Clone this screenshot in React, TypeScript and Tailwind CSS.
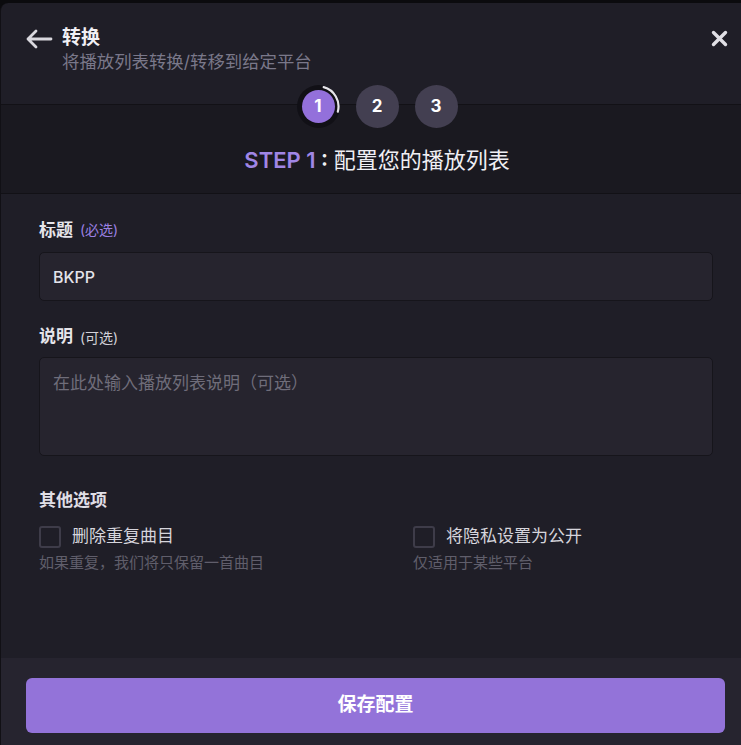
import React from "react";

const FONT = { fontFamily: "Inter, 'Noto Sans CJK SC', 'Noto Sans', sans-serif" };

function Checkbox() {
  return <div className="w-[22px] h-[22px] border-2 border-[#3e3c49] rounded-[3px] shrink-0" />;
}

export default function App() {
  return (
    <div className="w-[741px] h-[745px] bg-[#0b0b0e] pt-[3px] overflow-hidden" style={FONT}>
      <div className="h-[742px] bg-[#1f1e27] rounded-tl-[8px] border-l border-[#111015] flex flex-col">
        {/* Header */}
        <div className="h-[102px] shrink-0 relative border-b border-[#121116]">
          <div className="flex items-start pt-[23px] pl-[24px]">
            <svg width="28" height="22" viewBox="0 0 28 22" className="mt-[2px]" fill="none">
              <path d="M26 11 H3 M11 3 L3 11 L11 19" stroke="#d9d8de" strokeWidth="2.8" strokeLinecap="round" strokeLinejoin="round" />
            </svg>
            <div className="ml-[9px]">
              <div className="text-[19px] leading-[24px] font-bold text-[#f1f0f5]">转换</div>
              <div className="text-[17.4px] leading-[22px] text-[#7a788a] mt-[1px] whitespace-nowrap">将播放列表转换/转移到给定平台</div>
            </div>
          </div>
          <svg width="17" height="17" viewBox="0 0 17 17" className="absolute top-[27px] right-[13px]">
            <path d="M2.5 2.5 L14.5 14.5 M14.5 2.5 L2.5 14.5" stroke="#e0dfe5" strokeWidth="3.4" strokeLinecap="round" />
          </svg>
        </div>

        {/* Steps */}
        <div className="h-[89px] shrink-0 bg-[#1a1920] border-b border-[#121116] flex flex-col items-center pl-[12px]">
          <div className="relative z-10 -mt-[20px] flex gap-[16px] h-[43px]">
            <div className="relative w-[43px] h-[43px] rounded-full bg-[#111016] flex items-center justify-center">
              <div className="w-[33px] h-[33px] rounded-full bg-[#9370db] flex items-center justify-center text-white font-bold text-[17px]">1</div>
              <svg width="43" height="43" viewBox="0 0 43 43" className="absolute inset-0" fill="none">
                <path d="M26.68 2.18 A20 20 0 0 1 40.82 26.68" stroke="#e6e5ea" strokeWidth="2.2" strokeLinecap="round" />
              </svg>
            </div>
            <div className="w-[43px] h-[43px] rounded-full bg-[#433f51] flex items-center justify-center text-white font-bold text-[17px]">2</div>
            <div className="w-[43px] h-[43px] rounded-full bg-[#433f51] flex items-center justify-center text-white font-bold text-[17px]">3</div>
          </div>
          <div className="mt-[17px] text-[22px] leading-[30px] whitespace-nowrap">
            <span className="font-semibold text-[#a086e6]">STEP 1</span>
            <span className="font-semibold text-[#f0eff4]"> : </span>
            <span className="text-[#f0eff4]">配置您的播放列表</span>
          </div>
        </div>

        {/* Body */}
        <div className="flex-1 pl-[38px] pr-[28px]">
          <div className="pt-[26px] flex items-center h-[46px] leading-[20px]">
            <span className="text-[17px] font-bold text-[#e6e5eb]">标题</span>
            <span className="text-[14px] text-[#9b80e2] ml-[7px]">(必选)</span>
          </div>
          <div className="mt-[12px] h-[49px] bg-[#26242e] border border-[#16151b] rounded-[5px] px-[13px] flex items-center text-[16px] font-medium text-[#e4e3ea]">
            BKPP
          </div>
          <div className="mt-[26px] flex items-center h-[20px]">
            <span className="text-[17px] font-bold text-[#e6e5eb]">说明</span>
            <span className="text-[14px] text-[#d2d1d8] ml-[7px]">(可选)</span>
          </div>
          <div className="mt-[10px] h-[99px] bg-[#26242e] border border-[#16151b] rounded-[5px] px-[13px] pt-[13px] text-[17px] leading-[24px] text-[#6f6d7a]">
            在此处输入播放列表说明（可选）
          </div>
          <div className="mt-[34px] h-[20px] leading-[20px] text-[17px] font-bold text-[#e0dfe6]">其他选项</div>
          <div className="mt-[16px] flex">
            <div className="w-[374px]">
              <div className="flex items-center h-[22px]">
                <Checkbox />
                <span className="ml-[11px] text-[17px] text-[#d6d5dc]">删除重复曲目</span>
              </div>
              <div className="mt-[6px] text-[15px] leading-[18px] text-[#605e6b]">如果重复，我们将只保留一首曲目</div>
            </div>
            <div>
              <div className="flex items-center h-[22px]">
                <Checkbox />
                <span className="ml-[11px] text-[17px] text-[#d6d5dc]">将隐私设置为公开</span>
              </div>
              <div className="mt-[6px] text-[15px] leading-[18px] text-[#605e6b]">仅适用于某些平台</div>
            </div>
          </div>
        </div>

        {/* Footer */}
        <div className="h-[87px] shrink-0 bg-[#26242f] pt-[20px] pl-[25px] pr-[16px]">
          <button className="w-full h-[55px] bg-[#9373d9] rounded-[6px] flex items-center justify-center text-white font-bold text-[19px]">
            保存配置
          </button>
        </div>
      </div>
    </div>
  );
}
